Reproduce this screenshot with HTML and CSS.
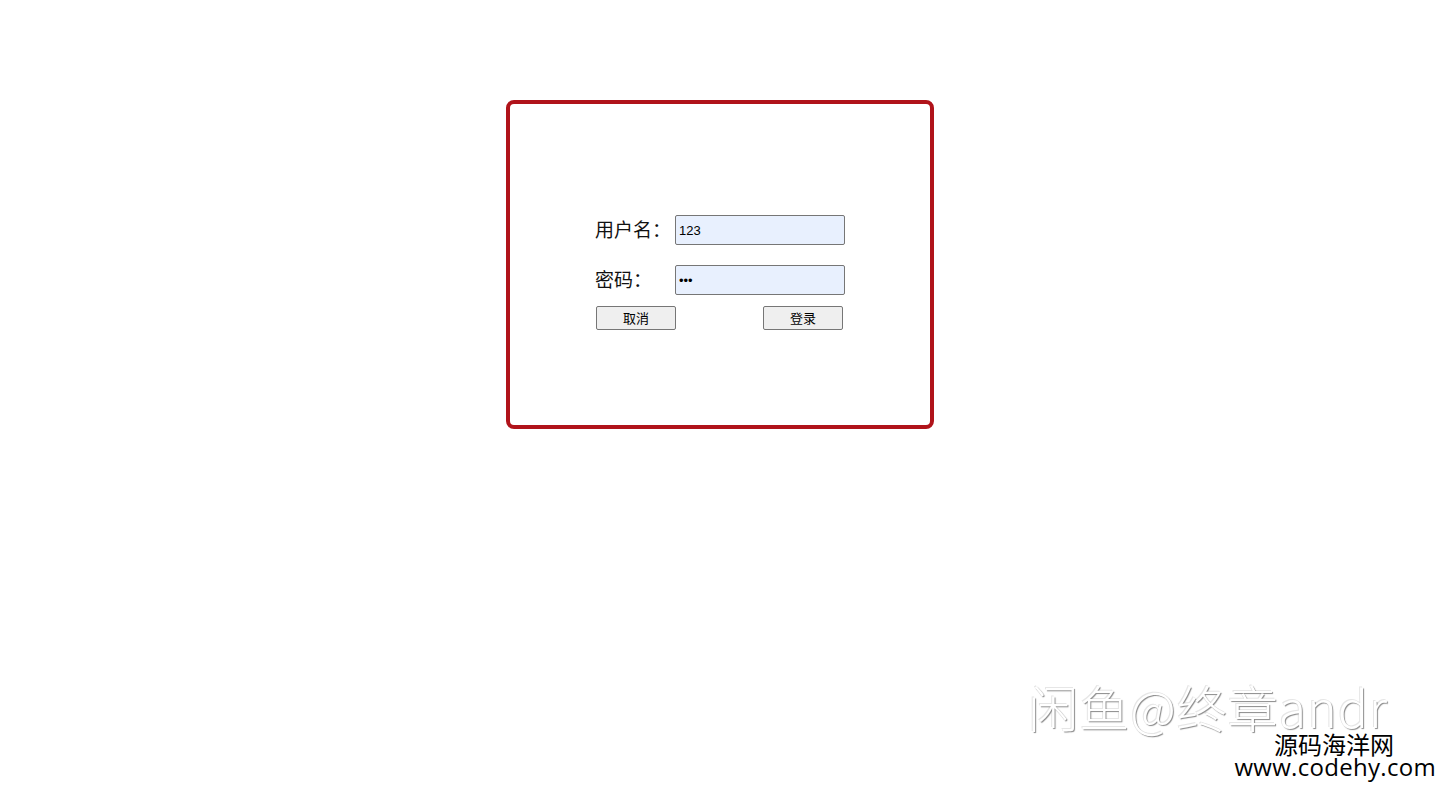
FILE: index.html
```html
<!DOCTYPE html>
<html lang="zh-CN">
<head>
  <meta charset="UTF-8" />
  <meta name="viewport" content="width=device-width, initial-scale=1.0"/>
  <title>登录</title>
  <link rel="stylesheet" href="styles.css">
</head>
<body>

  <div class="login-box">
    <form class="login-form">
      <div class="form-row">
        <label for="username">用户名：</label>
        <input type="text" id="username" value="123" />
      </div>
      <div class="form-row">
        <label for="password">密码：</label>
        <input type="password" id="password" value="123" />
      </div>
      <div class="form-buttons">
        <button type="button">取消</button>
        <button type="button">登录</button>
      </div>
    </form>
  </div>

  <div class="watermark">
    <p class="wm-name">闲鱼@终章andr</p>
    <p class="wm-site">源码海洋网</p>
    <p class="wm-url">www.codehy.com</p>
  </div>

</body>
</html>
```

FILE: styles.css
```css
body {
  margin: 0;
  padding: 0;
  background-color: #fff;
  font-family: "Liberation Sans", "Noto Sans CJK SC", sans-serif;
}

.login-box {
  width: 420px;
  height: 321px;
  margin: 100px auto 0;
  border: 4px solid #b0131a;
  border-radius: 8px;
  display: flex;
  justify-content: center;
  align-items: center;
}

.login-form {
  width: 250px;
  margin-top: 16px;
}

.form-row {
  display: flex;
  align-items: center;
  height: 30px;
  margin-bottom: 20px;
}

.form-row label {
  width: 80px;
  margin-top: -3px;
  font-family: "Noto Sans CJK SC", sans-serif;
  font-size: 19px;
  color: #111;
}

.form-row input {
  width: 170px;
  height: 30px;
  box-sizing: border-box;
  padding: 1px 3px;
  border: 1px solid #767676;
  border-radius: 2px;
  background-color: #e8f0fe;
  font-family: "Liberation Sans", sans-serif;
  font-size: 13px;
  color: #000;
}

.form-buttons {
  display: flex;
  justify-content: space-between;
  margin-top: -9px;
  padding: 0 2px 0 1px;
}

.form-buttons button {
  width: 80px;
  height: 24px;
  padding: 0 0 2px;
  border: 1px solid #767676;
  border-radius: 2px;
  background-color: #efefef;
  font-family: "Noto Sans CJK SC", sans-serif;
  font-size: 13px;
  color: #000;
}

.watermark {
  position: absolute;
  right: 4px;
  bottom: 9px;
  text-align: right;
  font-family: "Noto Sans CJK SC", sans-serif;
}

.watermark p {
  margin: 0;
}

.wm-name {
  font-size: 50px;
  line-height: 52px;
  letter-spacing: 1px;
  margin-right: 48px !important;
  color: #fff;
  font-weight: 300;
  text-shadow: 1px 1px 1px #8a8a8a, -1px -1px 0 #e6e6e6;
}

.wm-site {
  font-size: 24px;
  line-height: 23px;
  margin-right: 42px !important;
  color: #000;
}

.wm-url {
  font-family: "Open Sans", "Liberation Sans", sans-serif;
  font-size: 24px;
  line-height: 24px;
  letter-spacing: 0.3px;
  color: #000;
}
```
